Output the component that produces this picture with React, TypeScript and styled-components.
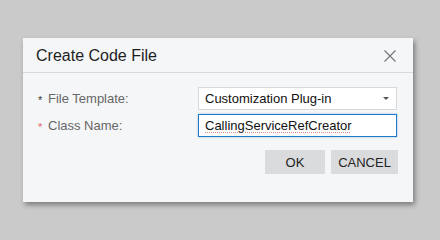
import React from "react";
import styled, { createGlobalStyle } from "styled-components";

const GlobalStyle = createGlobalStyle`
  html, body {
    margin: 0;
    padding: 0;
    background: #cacaca;
    font-family: "Liberation Sans", Arial, sans-serif;
  }
`;

const Page = styled.div`
  width: 440px;
  height: 240px;
  padding: 38px 0 0 23px;
  box-sizing: border-box;
`;

const Dialog = styled.div`
  width: 390px;
  height: 164px;
  background: #f5f6f8;
  box-shadow: 2px 3px 5px rgba(0, 0, 0, 0.38);
  display: flex;
  flex-direction: column;
`;

const Header = styled.div`
  height: 35px;
  display: flex;
  align-items: center;
  justify-content: space-between;
  padding: 1px 16px 0 13px;
  box-sizing: border-box;
  border-bottom: 1px solid #d9dadc;
`;

const Title = styled.h1`
  margin: 0;
  font-size: 16px;
  font-weight: normal;
  color: #1e1e1e;
`;

const CloseButton = styled.button`
  border: none;
  background: none;
  padding: 0;
  width: 14px;
  height: 14px;
  display: flex;
  cursor: pointer;
`;

const Body = styled.div`
  padding: 14px 15px 0 14px;
  display: flex;
  flex-direction: column;
  gap: 4px;
`;

const Row = styled.div`
  display: flex;
  align-items: center;
`;

const Label = styled.label`
  width: 161px;
  display: flex;
  align-items: center;
  font-size: 13px;
  color: #666;
`;

const Star = styled.span<{ $required?: boolean }>`
  width: 10px;
  padding-left: 1px;
  font-size: 11px;
  margin-top: 2px;
  color: ${(p) => (p.$required ? "#d9686a" : "#333")};
`;

const Field = styled.div<{ $focused?: boolean }>`
  width: 199px;
  height: 23px;
  box-sizing: border-box;
  background: #fff;
  border: 1px solid ${(p) => (p.$focused ? "#1f78c8" : "#d7d8da")};
  box-shadow: ${(p) => (p.$focused ? "0 0 2px rgba(31,120,200,0.4)" : "none")};
  display: flex;
  align-items: center;
  justify-content: space-between;
  padding: 0 7px 0 6px;
  font-size: 13px;
  color: #111;
`;

const Spelled = styled.span`
  text-decoration: underline dotted #e28a8a;
  text-decoration-thickness: 1px;
  text-underline-offset: 2px;
`;

const Caret = styled.span`
  width: 0;
  height: 0;
  border-left: 3.5px solid transparent;
  border-right: 3.5px solid transparent;
  border-top: 3.5px solid #555;
`;

const Actions = styled.div`
  display: flex;
  justify-content: flex-end;
  gap: 6px;
  margin-top: 9px;
`;

const Button = styled.button<{ $w: number }>`
  width: ${(p) => p.$w}px;
  height: 24px;
  border: none;
  background: #dadbdd;
  font-family: "Liberation Sans", Arial, sans-serif;
  font-size: 13px;
  color: #222;
  padding: 0;
`;

export default function App() {
  return (
    <>
      <GlobalStyle />
      <Page>
        <Dialog>
          <Header>
            <Title>Create Code File</Title>
            <CloseButton aria-label="Close">
              <svg width="14" height="14" viewBox="0 0 14 14">
                <path d="M1.5 1.5L12.5 12.5M12.5 1.5L1.5 12.5" stroke="#777" strokeWidth="1.2" />
              </svg>
            </CloseButton>
          </Header>
          <Body>
            <Row>
              <Label>
                <Star>*</Star>File Template:
              </Label>
              <Field>
                <span>Customization Plug-in</span>
                <Caret />
              </Field>
            </Row>
            <Row>
              <Label>
                <Star $required>*</Star>Class Name:
              </Label>
              <Field $focused>
                <Spelled>CallingServiceRefCreator</Spelled>
              </Field>
            </Row>
            <Actions>
              <Button $w={60}>OK</Button>
              <Button $w={67}>CANCEL</Button>
            </Actions>
          </Body>
        </Dialog>
      </Page>
    </>
  );
}
